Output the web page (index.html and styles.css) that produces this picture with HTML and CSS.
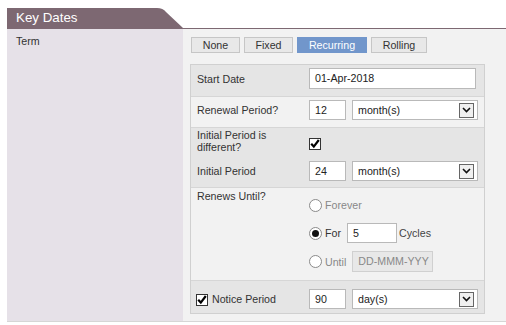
FILE: index.html
```html
<!DOCTYPE html>
<html>
<head>
<meta charset="utf-8">
<link rel="stylesheet" href="styles.css">
</head>
<body>
<div class="page">
  <div class="header"><div class="tab">Key Dates</div></div>
  <div class="body">
    <div class="side">Term</div>
    <div class="main">
      <div class="btns">
        <span class="btn b-none">None</span>
        <span class="btn b-fixed">Fixed</span>
        <span class="btn b-rec active">Recurring</span>
        <span class="btn b-roll">Rolling</span>
      </div>
      <div class="panel">
        <div class="row gray r-start">
          <div class="lbl">Start Date</div>
          <div class="ctl"><span class="input w-date">01-Apr-2018</span></div>
        </div>
        <div class="row r-renew">
          <div class="lbl">Renewal Period?</div>
          <div class="ctl">
            <span class="input w-num">12</span>
            <span class="select"><span class="sel-text">month(s)</span><span class="arrow"><svg width="9" height="6" viewBox="0 0 9 6"><path d="M1 1 L4.5 4.5 L8 1" fill="none" stroke="#111" stroke-width="1.6"/></svg></span></span>
          </div>
        </div>
        <div class="section gray">
          <div class="row r-diff">
            <div class="lbl two">Initial Period is<br>different?</div>
            <div class="ctl"><span class="check diff-check"><svg width="12" height="12" viewBox="0 0 12 12"><path d="M2.2 5.8 L4.8 8.6 L9.8 2" fill="none" stroke="#000" stroke-width="2.2"/></svg></span></div>
          </div>
          <div class="row r-init">
            <div class="lbl">Initial Period</div>
            <div class="ctl">
              <span class="input w-num">24</span>
              <span class="select"><span class="sel-text">month(s)</span><span class="arrow"><svg width="9" height="6" viewBox="0 0 9 6"><path d="M1 1 L4.5 4.5 L8 1" fill="none" stroke="#111" stroke-width="1.6"/></svg></span></span>
            </div>
          </div>
        </div>
        <div class="row r-renews">
          <div class="lbl top">Renews Until?</div>
          <div class="opts">
            <div class="opt"><span class="radio"></span><span class="muted">Forever</span></div>
            <div class="opt"><span class="radio on"></span><span class="opt-lbl">For</span><span class="input w-for">5</span><span class="suffix">Cycles</span></div>
            <div class="opt"><span class="radio"></span><span class="muted opt-lbl">Until</span><span class="input w-until disabled">DD-MMM-YYY</span></div>
          </div>
        </div>
        <div class="row gray r-notice">
          <div class="lbl notice-lbl"><span class="check"><svg width="12" height="12" viewBox="0 0 12 12"><path d="M2.2 5.8 L4.8 8.6 L9.8 2" fill="none" stroke="#000" stroke-width="2.2"/></svg></span>Notice Period</div>
          <div class="ctl">
            <span class="input w-num">90</span>
            <span class="select"><span class="sel-text">day(s)</span><span class="arrow"><svg width="9" height="6" viewBox="0 0 9 6"><path d="M1 1 L4.5 4.5 L8 1" fill="none" stroke="#111" stroke-width="1.6"/></svg></span></span>
          </div>
        </div>
      </div>
    </div>
  </div>
</div>
</body>
</html>
```
FILE: styles.css
```css
* { box-sizing: border-box; }
html, body { margin: 0; padding: 0; background: #fff; }
body {
  font-family: "Liberation Sans", Arial, sans-serif;
  font-size: 10.67px;
  color: #333;
}
.page { padding: 8px 0 0 7px; }
.header {
  height: 21px;
  border-bottom: 1px solid #7d6872;
}
.tab {
  width: 176px;
  height: 20px;
  background: #7d6872;
  color: #fff;
  font-size: 13.33px;
  line-height: 20px;
  padding-left: 9px;
  clip-path: path('M0 0 H150 Q156 0 159 4 L176 20 H0 Z');
}
.body {
  display: flex;
  border-bottom: 1px solid #d6d6d6;
}
.side {
  width: 176px;
  flex: none;
  background: #e6e1e8;
  padding: 6px 9px;
  line-height: 13px;
}
.main {
  flex: 1;
  background: #f2f2f2;
  padding: 8px 21px 7px 7px;
}
.btns {
  display: flex;
  gap: 4px;
  margin-left: 1px;
  margin-bottom: 11px;
}
.btn {
  height: 16px;
  line-height: 14px;
  text-align: center;
  border: 1px solid #c6c6c6;
  background: #e8e8e8;
  color: #333;
}
.b-none { width: 49px; }
.b-fixed { width: 49px; }
.b-rec { width: 70px; }
.b-roll { width: 56px; }
.btn.active {
  background: #7196cb;
  border-color: #7196cb;
  color: #fff;
}
.panel {
  border: 1px solid #d0d0d0;
  background: #f2f2f2;
}
.gray { background: #e5e5e5; }
.row {
  display: grid;
  grid-template-columns: 118px 1fr;
  align-items: center;
}
.lbl { padding-left: 6px; line-height: 12px; }
.ctl { display: flex; align-items: center; gap: 6px; }
.r-start { padding: 3px 0 7px; border-bottom: 1px solid #d6d6d6; }
.r-renew { padding: 3px 0 7px; border-bottom: 1px solid #d6d6d6; }
.section { padding: 1px 0 6px; border-bottom: 1px solid #d6d6d6; }
.r-diff { align-items: start; height: 24px; margin-bottom: 8px; }
.diff-check { margin-top: 9px; }
.r-renews { align-items: start; padding: 2px 0 8px; border-bottom: 1px solid #d6d6d6; }
.r-notice { padding: 8px 0 4px; }
.notice-lbl { display: flex; align-items: center; gap: 4px; padding-left: 5px; }
.notice-lbl .check { margin-top: 1px; }

.input {
  display: inline-block;
  height: 20px;
  line-height: 18px;
  background: #fff;
  border: 1px solid #b9b9b9;
  padding-left: 5px;
  color: #222;
  white-space: nowrap;
  overflow: hidden;
}
.w-date { width: 167px; height: 21px; line-height: 19px; }
.w-num { width: 37px; }
.w-for { width: 50px; }
.w-until { width: 81px; height: 21px; line-height: 19px; }
.input.disabled { background: #e8e8e8; border-color: #d0d0d0; color: #888; }
.select {
  width: 126px;
  height: 20px;
  background: #fff;
  border: 1px solid #b9b9b9;
  display: flex;
  align-items: center;
  justify-content: space-between;
  padding: 0 3px 0 5px;
  color: #222;
}
.arrow {
  width: 15px;
  height: 15px;
  border: 1px solid #666;
  background: #f0f0f0;
  display: flex;
  align-items: center;
  justify-content: center;
}
.arrow svg { display: block; }
.check {
  width: 12px;
  height: 12px;
  border: 1px solid #333;
  background: #fff;
  display: block;
  position: relative;
}
.check svg { position: absolute; left: -1px; top: -1px; }
.opts {
  display: flex;
  flex-direction: column;
  gap: 8px;
  padding-top: 5px;
}
.opt {
  display: flex;
  align-items: center;
  height: 20px;
}
.opt:last-child { height: 21px; }
.radio {
  width: 13px;
  height: 13px;
  border: 1px solid #8a8a8a;
  border-radius: 50%;
  background: #fff;
  margin-right: 3px;
  position: relative;
  flex: none;
}
.radio.on::after {
  content: "";
  position: absolute;
  left: 2px; top: 2px;
  width: 7px; height: 7px;
  border-radius: 50%;
  background: #111;
}
.muted { color: #888; }
.opt-lbl { margin-right: 6px; }
.opt-lbl.muted { margin-right: 6px; }
.suffix { margin-left: 2px; color: #444; }
```
